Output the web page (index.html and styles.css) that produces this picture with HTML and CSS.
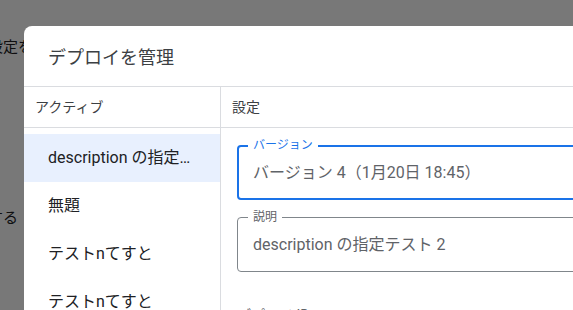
FILE: index.html
```html
<!DOCTYPE html>
<html lang="ja">
<head>
<meta charset="utf-8">
<link rel="stylesheet" href="styles.css">
</head>
<body>
<div class="page">
  <div class="page-line first">設定を変更する</div>
  <div class="page-line second">する</div>
</div>
<div class="scrim"></div>
<div class="dialog">
  <div class="dialog-title">デプロイを管理</div>
  <div class="dialog-body">
    <div class="list-col">
      <div class="col-head">アクティブ</div>
      <div class="list">
        <div class="item selected">description の指定テスト 2</div>
        <div class="item">無題</div>
        <div class="item">テストnてすと</div>
        <div class="item">テストnてすと</div>
      </div>
    </div>
    <div class="settings-col">
      <div class="col-head">設定</div>
      <div class="settings">
        <div class="field focused">
          <span class="field-label">バージョン</span>
          <div class="field-value">バージョン 4（1月20日 18:45）</div>
        </div>
        <div class="field">
          <span class="field-label">説明</span>
          <div class="field-value">description の指定テスト 2</div>
        </div>
        <div class="section-label">デプロイ ID</div>
      </div>
    </div>
  </div>
</div>
</body>
</html>
```
FILE: styles.css
```css
html, body {
  margin: 0;
  padding: 0;
}
body {
  width: 573px;
  height: 310px;
  overflow: hidden;
  position: relative;
  background: #ffffff;
  font-family: "Roboto", "Noto Sans CJK JP", sans-serif;
}
.page {
  padding-top: 37px;
  margin-left: -12px;
  color: #202124;
  font-size: 15px;
  line-height: 21px;
  white-space: nowrap;
}
.page-line.second {
  margin-top: 150px;
  margin-left: 0;
}
.scrim {
  position: absolute;
  inset: 0;
  background: rgba(0, 0, 0, 0.53);
}
.dialog {
  position: absolute;
  left: 24px;
  top: 26px;
  width: 660px;
  height: 420px;
  background: #ffffff;
  border-radius: 8px 8px 0 0;
  display: flex;
  flex-direction: column;
}
.dialog-title {
  box-sizing: border-box;
  height: 61px;
  padding: 20px 24px 0;
  font-size: 18px;
  line-height: 24px;
  color: #3c4043;
  border-bottom: 1px solid #dadce0;
}
.dialog-body {
  display: grid;
  grid-template-columns: 197px 1fr;
  flex: 1;
}
.list-col {
  border-right: 1px solid #dadce0;
}
.col-head {
  box-sizing: border-box;
  height: 41px;
  padding: 0 12px 0 11px;
  line-height: 40px;
  font-size: 14px;
  color: #3c4043;
  border-bottom: 1px solid #dadce0;
}
.list {
  padding-top: 6px;
}
.item {
  height: 48px;
  line-height: 48px;
  padding: 0 24px;
  font-size: 16px;
  color: #202124;
  white-space: nowrap;
  overflow: hidden;
  text-overflow: ellipsis;
}
.item.selected {
  background: #e8f0fe;
}
.settings {
  padding: 17px 0 0 16px;
}
.field {
  position: relative;
  box-sizing: border-box;
  height: 55px;
  border: 1px solid #80868b;
  border-radius: 4px;
  margin-bottom: 17px;
}
.field.focused {
  border: 2px solid #1a73e8;
}
.field-label {
  position: absolute;
  top: -8px;
  left: 10px;
  padding: 0 5px;
  background: #ffffff;
  font-size: 12px;
  line-height: 14px;
  color: #5f6368;
}
.field.focused .field-label {
  top: -9px;
  left: 9px;
  color: #1a73e8;
}
.field-value {
  padding-left: 15px;
  line-height: 53px;
  font-size: 16px;
  color: #5f6368;
  white-space: nowrap;
}
.field.focused .field-value {
  padding-left: 14px;
  line-height: 51px;
}
.section-label {
  margin-top: 33px;
  font-size: 14px;
  line-height: 20px;
  color: #5f6368;
}
```
